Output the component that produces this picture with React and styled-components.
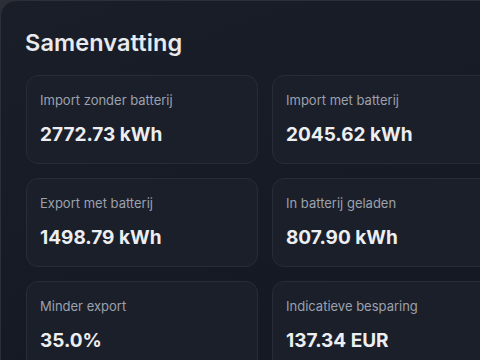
import React from "react";
import styled, { createGlobalStyle } from "styled-components";

const Global = createGlobalStyle`
  html, body { margin: 0; padding: 0; overflow: hidden; background: #2c2f37; }
  body { font-family: Inter, "Noto Sans", sans-serif; width: 480px; height: 360px; }
`;

const Panel = styled.section`
  box-sizing: border-box;
  width: 760px;
  min-height: 420px;
  background: linear-gradient(160deg, #1a1e28 0%, #151923 60%, #141822 100%);
  border: 1px solid #2a2f3b;
  border-radius: 16px;
  padding: 26px 24px 24px 25px;
`;

const Title = styled.h2`
  margin: 0 0 16px -1px;
  font-size: 23.5px;
  line-height: 32px;
  font-weight: 600;
  color: #e8eaee;
  letter-spacing: 0.1px;
`;

const Grid = styled.div`
  display: grid;
  grid-template-columns: repeat(3, 232px);
  gap: 14px;
`;

const Card = styled.div`
  box-sizing: border-box;
  height: 89px;
  background: #1b1f2a;
  border: 1px solid #272c37;
  border-radius: 12px;
  padding: 15px 14px 0 13px;
  display: flex;
  flex-direction: column;
  gap: 14px;
`;

const Label = styled.div`
  font-size: 13px;
  line-height: 18px;
  color: #9ba1ad;
  font-weight: 400;
`;

const Value = styled.div`
  font-size: 19px;
  line-height: 24px;
  font-weight: 700;
  color: #eceef1;
`;

const items = [
  ["Import zonder batterij", "2772.73 kWh"],
  ["Import met batterij", "2045.62 kWh"],
  ["", ""],
  ["Export met batterij", "1498.79 kWh"],
  ["In batterij geladen", "807.90 kWh"],
  ["", ""],
  ["Minder export", "35.0%"],
  ["Indicatieve besparing", "137.34 EUR"],
  ["", ""],
];

export default function App() {
  return (
    <>
      <Global />
      <Panel>
        <Title>Samenvatting</Title>
        <Grid>
          {items.map(([l, v], i) => (
            <Card key={i}>
              <Label>{l}</Label>
              <Value>{v}</Value>
            </Card>
          ))}
        </Grid>
      </Panel>
    </>
  );
}
